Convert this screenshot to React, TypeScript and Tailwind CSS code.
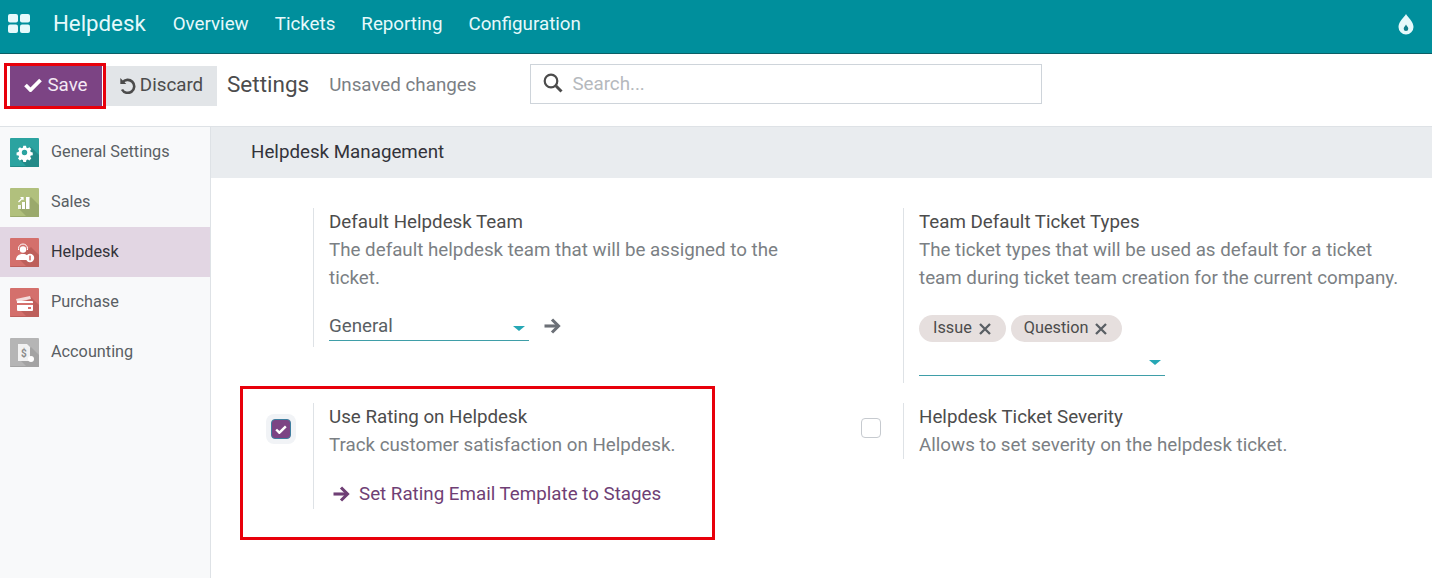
function Tile({ color, shadow, children }: { color: string; shadow: string; children: React.ReactNode }) {
  return (
    <svg width="29" height="29" viewBox="0 0 29 29" className="shrink-0 rounded-[1px]">
      <rect width="29" height="29" fill={color} />
      <path d="M8 20 L17 29 H29 V17 L21 9 Z" fill={shadow} />
      <rect y="28" width="29" height="1" fill={shadow} />
      {children}
    </svg>
  );
}

function ArrowRight({ className }: { className?: string }) {
  return (
    <svg viewBox="0 0 17 16" className={className} fill="none" stroke="currentColor" strokeWidth="3.1">
      <path d="M0.500 8H14" />
      <path d="M8 1.500L14.500 8L8 14.500" />
    </svg>
  );
}

function Check({ className }: { className?: string }) {
  return (
    <svg viewBox="0 0 18 14" className={className} fill="none" stroke="currentColor" strokeWidth="3.8">
      <path d="M1.500 7L6.500 12L16.500 2" />
    </svg>
  );
}

function Times() {
  return (
    <svg width="12" height="12" viewBox="0 0 12 12" stroke="#5a5f64" strokeWidth="2.3" className="shrink-0">
      <path d="M1 1L11 11M11 1L1 11" />
    </svg>
  );
}

const sections = [
  {
    name: 'General Settings',
    icon: (
      <Tile color="#2ba3a0" shadow="#238a88">
        <path
          d="M13 7h3l.5 2.2 1.4.6 1.9-1.2 2.1 2.1-1.2 1.9.6 1.4 2.2.5v3l-2.2.5-.6 1.4 1.2 1.9-2.1 2.1-1.9-1.2-1.4.6-.5 2.2h-3l-.5-2.2-1.4-.6-1.9 1.2-2.1-2.1 1.2-1.9-.6-1.4-2.2-.5v-3l2.2-.5.6-1.4-1.2-1.9 2.1-2.1 1.9 1.2 1.4-.6z"
          fill="#fff"
          transform="translate(1.6 1.4) scale(0.9)"
        />
        <circle cx="14.5" cy="14.5" r="2.7" fill="#2ba3a0" />
      </Tile>
    ),
  },
  {
    name: 'Sales',
    icon: (
      <Tile color="#b1c07d" shadow="#9aa96c">
        <rect x="16" y="9" width="3.500" height="12" fill="#fff" />
        <rect x="12" y="14" width="3" height="7" fill="#fff" />
        <rect x="8" y="17" width="3" height="4" fill="#fff" opacity="0.85" />
        <path d="M8.500 14L13 9.500M10.500 9.500H13V12" fill="none" stroke="#fff" strokeWidth="1.200" />
      </Tile>
    ),
  },
  {
    name: 'Helpdesk',
    active: true,
    icon: (
      <Tile color="#d4706c" shadow="#bd5f5b">
        <circle cx="13" cy="11.500" r="3.200" fill="#fff" />
        <path d="M8.500 12V10.500a4.500 4.500 0 0 1 9 0V12" fill="none" stroke="#fff" strokeWidth="1" />
        <path d="M6 22c0-4 3-6 7-6 2 0 3 .5 4 1.200V22z" fill="#fff" />
        <circle cx="20" cy="20" r="4.200" fill="#fff" />
        <rect x="19.200" y="17.600" width="1.600" height="4.800" fill="#d4706c" />
      </Tile>
    ),
  },
  {
    name: 'Purchase',
    icon: (
      <Tile color="#d4706c" shadow="#bd5f5b">
        <path d="M6 11l14-3 1 3-14 3z" fill="#fff" opacity="0.75" />
        <rect x="7" y="13" width="16" height="10" rx="1" fill="#fff" />
        <rect x="7" y="15" width="16" height="2" fill="#d4706c" />
        <rect x="18" y="19" width="3" height="2" fill="#d4706c" />
      </Tile>
    ),
  },
  {
    name: 'Accounting',
    icon: (
      <Tile color="#b5b5b5" shadow="#a3a3a3">
        <path d="M8 6h9l3 3v14H8z" fill="#f2f2f2" />
        <text x="11" y="19" fontSize="10" fontWeight="700" fill="#8a8a8a" fontFamily="Roboto, sans-serif">
          $
        </text>
        <circle cx="21" cy="21" r="3" fill="#fff" />
      </Tile>
    ),
  },
];

function Caret({ className }: { className?: string }) {
  return <span className={`h-0 w-0 border-x-[6px] border-t-[5px] border-x-transparent border-t-[#26a7b5] ${className ?? ''}`} />;
}

function Setting({ title, desc, box, children }: { title: string; desc: string; box?: React.ReactNode; children?: React.ReactNode }) {
  return (
    <div className="flex items-start">
      <div className="flex h-[40px] w-[70px] shrink-0 items-center justify-end pt-[10px] pr-[22px]">{box}</div>
      <div className="border-l border-[#dee2e6] pl-[15px]">
        <div className="text-[18.750px] leading-[28px] text-[#4c4c4c]">{title}</div>
        <div className="w-[490px] text-[18.750px] leading-[28px] text-[#7b7f84]">{desc}</div>
        {children}
      </div>
    </div>
  );
}

export default function App() {
  return (
    <div className="relative h-[578px] w-[1432px] overflow-hidden bg-white font-['Roboto',sans-serif]">
      <nav className="flex h-[54px] items-center border-b border-[#0b5f66] bg-[#008f9c] pb-[5px] text-[#e6f9fb]">
        <svg width="22" height="20" viewBox="0 0 22 20" className="mb-[1px] ml-[8px]" fill="#e6f9fb">
          <rect width="10" height="8.5" rx="2" />
          <rect x="12" width="10" height="8.5" rx="2" />
          <rect y="10.5" width="10" height="8.5" rx="2" />
          <rect x="12" y="10.5" width="10" height="8.5" rx="2" />
        </svg>
        <span className="ml-[23px] text-[22.250px]">Helpdesk</span>
        <div className="ml-[27px] flex gap-[26px] text-[18.750px]">
          <span>Overview</span>
          <span>Tickets</span>
          <span>Reporting</span>
          <span>Configuration</span>
        </div>
        <svg width="16" height="21" viewBox="0 0 16 21" className="mr-[18px] ml-auto">
          <path d="M8 0c1.500 3 7.500 7.500 7.500 13a7.500 7.500 0 0 1-15 0C.5 7.500 6.500 3 8 0z" fill="#e6f9fb" />
          <path d="M8 10.500c.5 1.300 2.300 2.500 2.300 4.200a2.300 2.300 0 0 1-4.600 0c0-1.700 1.800-2.900 2.300-4.200z" fill="#0f7f8c" />
        </svg>
      </nav>

      <div className="flex h-[73px] items-start border-b border-[#dee2e6]">
        <button className="mt-[12px] ml-[10px] flex h-[40px] w-[92px] items-center justify-center gap-[5px] bg-[#7c4484] pb-[2px] text-[18.750px] text-[#f3e9f4]">
          <Check className="h-[14px] w-[18px] text-white" />
          Save
        </button>
        <button className="mt-[12px] ml-[3px] flex h-[40px] w-[112px] items-center justify-center gap-[4px] bg-[#e2e5e8] pb-[2px] text-[18.750px] text-[#4c4c4c]">
          <svg width="17" height="17" viewBox="0 0 17 17" fill="none" stroke="currentColor" strokeWidth="2.600" className="shrink-0">
            <path d="M3.500 5.500A6.500 6.500 0 1 1 3 12.500" />
            <path d="M1.300 1v6h6z" fill="currentColor" stroke="none" />
          </svg>
          Discard
        </button>
        <span className="mt-[14px] ml-[10px] text-[22.500px] text-[#4c4c4c]">Settings</span>
        <span className="mt-[17px] ml-[20px] text-[18.750px] text-[#7b7f84]">Unsaved changes</span>
        <div className="mt-[10px] ml-[54px] flex h-[40px] w-[512px] items-center gap-[9px] border border-[#ced4da] pl-[12px] text-[18.750px] text-[#b5b9bd]">
          <svg width="20" height="20" viewBox="0 0 20 20" fill="none" stroke="#4c4c4c" className="mb-[2px] shrink-0">
            <circle cx="8" cy="8" r="6.300" strokeWidth="2.200" />
            <path d="M12.800 12.800L18.500 18.500" strokeWidth="3" />
          </svg>
          Search...
        </div>
      </div>

      <div className="flex h-[451px]">
        <aside className="w-[211px] shrink-0 border-r border-[#dee2e6] bg-[#f8f9fa]">
          {sections.map((s) => (
            <div
              key={s.name}
              className={`flex h-[50px] items-center gap-[12px] pl-[10px] text-[16.250px] ${
                s.active ? 'bg-[#e2d6e3] text-[#33333a]' : 'text-[#5a5f64]'
              }`}
            >
              {s.icon}
              {s.name}
            </div>
          ))}
        </aside>

        <main className="flex-1">
          <div className="flex h-[51px] items-center bg-[#e9ecef] pl-[40px] text-[18.750px] text-[#33333a]">Helpdesk Management</div>
          <div className="mt-[30px] ml-[32px] grid grid-cols-[590px_590px] items-start gap-y-[20px]">
            <Setting title="Default Helpdesk Team" desc="The default helpdesk team that will be assigned to the ticket.">
              <div className="mt-[18px] flex items-center pb-[6px]">
                <div className="flex h-[31px] w-[200px] items-center justify-between border-b border-[#3f9ea8] pt-[2px] pr-[4px] text-[18.750px] text-[#5a5f64]">
                  General
                  <Caret className="mt-[5px]" />
                </div>
                <ArrowRight className="ml-[15px] h-[16px] w-[17px] text-[#6c7077]" />
              </div>
            </Setting>
            <Setting title="Team Default Ticket Types" desc="The ticket types that will be used as default for a ticket team during ticket team creation for the current company.">
              <div className="mt-[23px] flex gap-[5px]">
                <span className="flex h-[27px] items-center gap-[7px] rounded-full bg-[#e6dfde] pr-[15px] pl-[14px] text-[16.250px] text-[#4c4c4c]">
                  Issue
                  <Times />
                </span>
                <span className="flex h-[27px] items-center gap-[7px] rounded-full bg-[#e6dfde] pr-[15px] pl-[13px] text-[16.250px] text-[#4c4c4c]">
                  Question
                  <Times />
                </span>
              </div>
              <div className="mb-[7px] flex h-[34px] w-[246px] items-end justify-end border-b border-[#3f9ea8] pr-[4px] pb-[10px]">
                <Caret />
              </div>
            </Setting>
            <Setting
              title="Use Rating on Helpdesk"
              desc="Track customer satisfaction on Helpdesk."
              box={
                <span className="flex h-[30px] w-[30px] translate-x-[5px] translate-y-[1px] items-center justify-center rounded-[8px] bg-[#f1f3f6]">
                  <span className="flex h-[20px] w-[20px] items-center justify-center rounded-[4px] border border-[#3f7fa0] bg-[#7c4484]">
                    <Check className="h-[9px] w-[12px] text-white" />
                  </span>
                </span>
              }
            >
              <div className="mt-[21px] mb-[1px] flex h-[28px] items-center gap-[9px] pl-[4px] text-[18.750px] text-[#6f3f75]">
                <ArrowRight className="h-[16px] w-[17px]" />
                Set Rating Email Template to Stages
              </div>
            </Setting>
            <Setting
              title="Helpdesk Ticket Severity"
              desc="Allows to set severity on the helpdesk ticket."
              box={<span className="h-[20px] w-[20px] rounded-[4px] border border-[#c6cacf] bg-white" />}
            />
          </div>
        </main>
      </div>

      {/* red annotation boxes from the screenshot */}
      <div className="absolute top-[63px] left-[4px] h-[46px] w-[102px] border-[3px] border-[#e8000b]" />
      <div className="absolute top-[386px] left-[240px] h-[154px] w-[475px] border-[3px] border-[#e8000b]" />
    </div>
  );
}
